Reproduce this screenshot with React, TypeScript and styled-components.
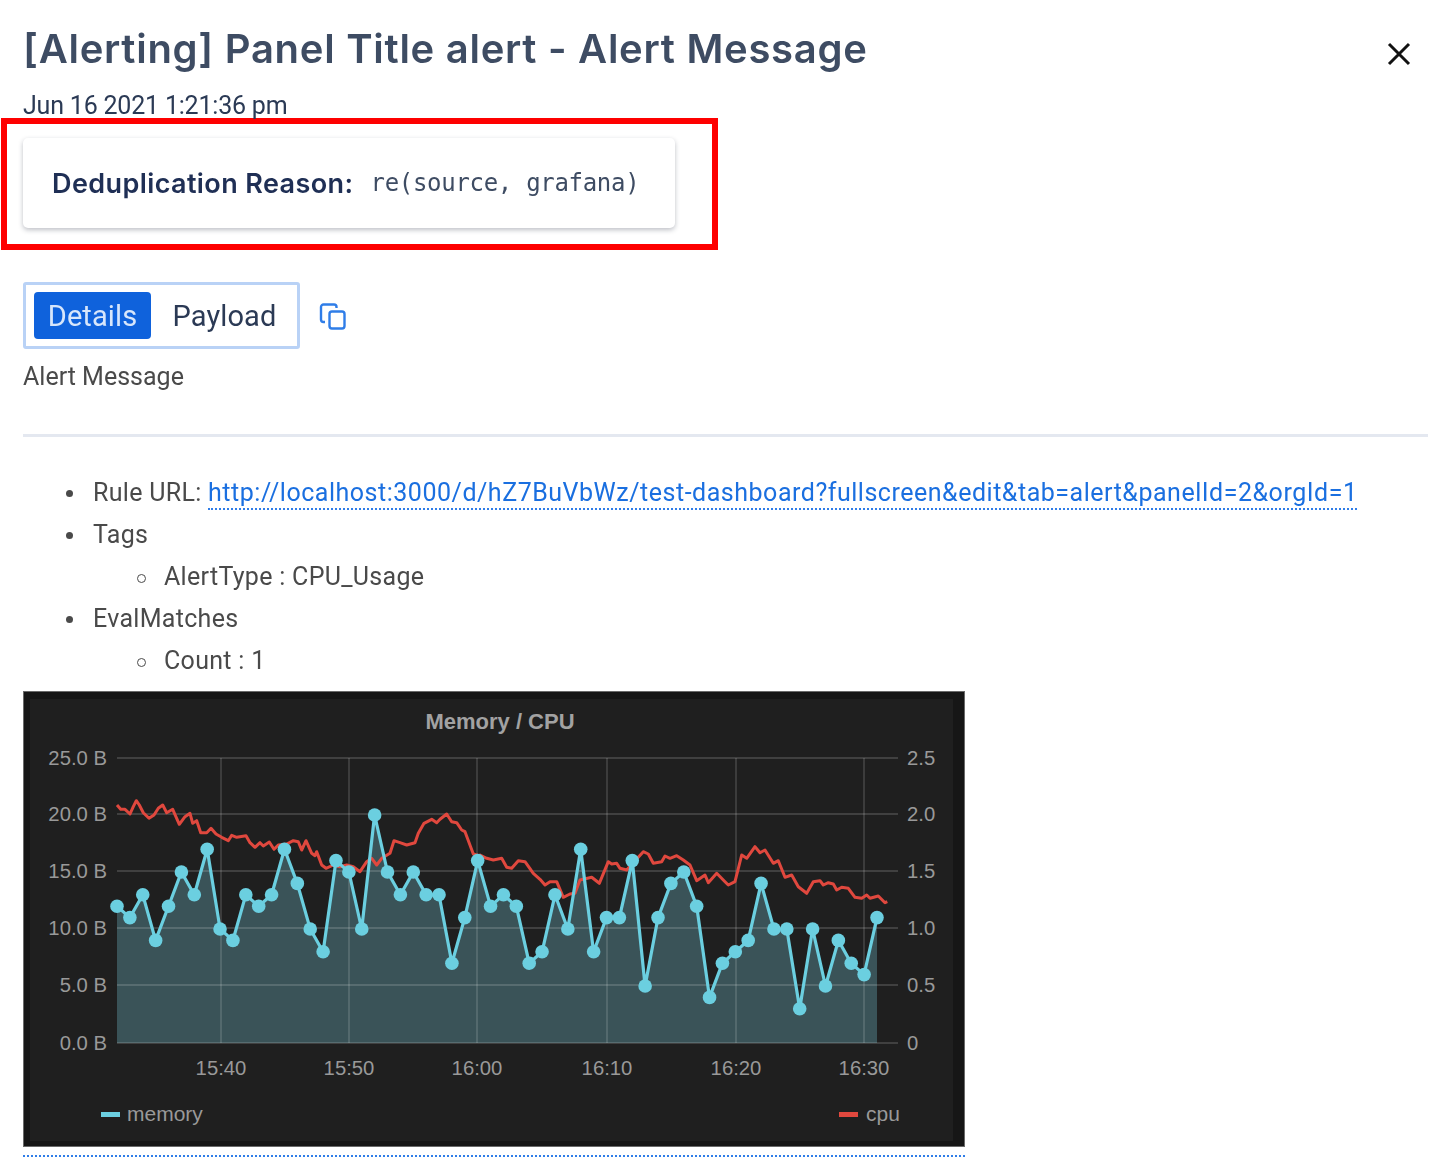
import React from 'react';
import styled, { createGlobalStyle } from 'styled-components';

const GlobalStyle = createGlobalStyle`
  html, body {
    margin: 0;
    padding: 0;
    background: #fff;
    font-family: Roboto, "Noto Sans", sans-serif;
  }
`;

const Page = styled.div`
  width: 1446px;
  height: 1160px;
  overflow: hidden;
  box-sizing: border-box;
  padding: 23px 18px 0 23px;
  filter: blur(0.4px);
`;

const Header = styled.div`
  display: flex;
  justify-content: space-between;
  align-items: flex-start;
`;

const Title = styled.h1`
  margin: 0;
  font-family: Inter, Roboto, sans-serif;
  font-size: 40px;
  line-height: 52px;
  font-weight: 600;
  color: #3e4c63;
  letter-spacing: 0.72px;
`;

const CloseButton = styled.button`
  display: flex;
  margin: 19px 17px 0 0;
  padding: 0;
  border: 0;
  background: none;
  color: #111;
`;

const Timestamp = styled.div`
  margin-top: 18px;
  font-size: 25px;
  line-height: 26px;
  color: #2b3a55;
  letter-spacing: -0.2px;
`;

const Highlight = styled.div`
  box-sizing: border-box;
  width: 717px;
  height: 132px;
  margin: -1px 0 0 -22px;
  padding: 14px 0 0 16px;
  border: 6px solid #fe0000;
`;

const ReasonCard = styled.div`
  display: flex;
  align-items: center;
  box-sizing: border-box;
  width: 652px;
  height: 90px;
  padding-left: 29px;
  border-radius: 5px;
  background: #fff;
  box-shadow: 0 2px 5px rgba(20, 30, 50, 0.28);
`;

const ReasonLabel = styled.span`
  font-family: Inter, Roboto, sans-serif;
  font-size: 27px;
  font-weight: 600;
  color: #1f2f55;
  letter-spacing: 0.4px;
`;

const ReasonValue = styled.code`
  margin-left: 17px;
  font-family: "DejaVu Sans Mono", monospace;
  font-size: 24px;
  color: #3e4c63;
  letter-spacing: -0.3px;
`;

const TabRow = styled.div`
  display: flex;
  align-items: center;
  gap: 19px;
  margin-top: 32px;
`;

const TabBox = styled.div`
  display: flex;
  box-sizing: border-box;
  width: 277px;
  height: 67px;
  padding: 7px 8px;
  border: 3px solid #b9d2f6;
  border-radius: 3px;
`;

const Tab = styled.div<{ active?: boolean }>`
  display: flex;
  align-items: center;
  justify-content: center;
  flex-shrink: 0;
  box-sizing: border-box;
  width: ${p => (p.active ? '117px' : '138px')};
  padding-left: ${p => (p.active ? '0' : '9px')};
  border-radius: 4px;
  font-size: 29px;
  letter-spacing: 0.1px;
  color: ${p => (p.active ? '#d7e6fb' : '#2b3a55')};
  background: ${p => (p.active ? '#0f62dc' : 'transparent')};
`;

const CopyIcon = styled.svg`
  display: block;
  color: #2f7de8;
`;

const Message = styled.div`
  margin-top: 14px;
  font-size: 25px;
  line-height: 27px;
  color: #4a4a4a;
`;

const Divider = styled.hr`
  height: 3px;
  margin: 44px 0 0;
  border: 0;
  background: #e4e8f0;
`;

const BulletList = styled.ul`
  margin: 35px 0 0;
  padding: 0 0 0 70px;
  font-size: 25px;
  line-height: 42px;
  color: #4a4a4a;
  list-style: none;
  letter-spacing: 0.3px;
`;

const BulletItem = styled.li`
  position: relative;

  &::before {
    content: '';
    position: absolute;
    left: -27px;
    top: 18px;
    width: 7px;
    height: 7px;
    border-radius: 50%;
    background: #4a4a4a;
  }
`;

const SubList = styled.ul`
  margin: 0;
  padding-left: 71px;
  list-style: none;
`;

const SubItem = styled.li`
  position: relative;

  &::before {
    content: '';
    position: absolute;
    left: -27px;
    top: 18px;
    box-sizing: border-box;
    width: 9px;
    height: 9px;
    border: 1.5px solid #4a4a4a;
    border-radius: 50%;
  }
`;

const Link = styled.a`
  color: #1a6fe0;
  letter-spacing: 0.52px;
  border-bottom: 2px dotted #2f7de8;
  padding-bottom: 1px;
`;

const ChartLink = styled.div`
  width: 942px;
  margin-top: 9px;
  padding-bottom: 8px;
  border-bottom: 2px dotted #2f7de8;
`;

const ChartSvg = styled.svg`
  display: block;
  font-family: "Liberation Sans", Arial, sans-serif;
`;

const memory = [
  12, 11, 13, 9, 12, 15, 13, 17, 10, 9, 13, 12, 13, 17, 14, 10, 8, 16, 15, 10,
  20, 15, 13, 15, 13, 13, 7, 11, 16, 12, 13, 12, 7, 8, 13, 10, 17, 8, 11, 11,
  16, 5, 11, 14, 15, 12, 4, 7, 8, 9, 14, 10, 10, 3, 10, 5, 9, 7, 6, 11,
];

// traced from the reference in 3x crop coordinates
const cpuLeft = [
  351,345, 362,358, 375,358, 390,372, 400,350, 409,332, 418,345, 430,368, 447,385, 462,375,
  475,355, 488,345, 500,368, 518,358, 538,403, 555,380, 570,370, 578,400, 590,392, 602,428,
  620,428, 633,415, 648,432, 665,442, 685,452, 695,436, 710,442, 738,437, 750,458, 765,472,
  780,458, 790,468, 808,456, 822,478, 835,465, 860,462, 880,452, 895,455, 905,480, 918,452,
  935,490, 945,497, 950,485, 965,525, 978,535, 1000,525, 1020,530, 1040,525, 1060,530, 1080,545,
  1100,515, 1115,505, 1130,525, 1145,505, 1170,490, 1182,452, 1200,458, 1220,465, 1245,458, 1255,430,
  1272,400, 1295,388, 1310,398, 1320,388, 1340,372, 1355,395, 1370,398, 1385,420, 1395,425, 1420,492,
  1440,498,
];
const cpuRight = [
  0,495, 20,505, 40,510, 65,505, 80,532, 95,535, 115,512, 135,515, 160,550, 180,568,
  195,585, 210,575, 230,575, 250,622, 270,612, 285,610, 300,570, 335,562, 358,580, 385,515,
  395,522, 410,520, 420,535, 440,540, 490,485, 505,492, 520,520, 545,515, 555,498, 570,505,
  590,497, 610,510, 630,525, 650,572, 675,555, 685,578, 710,550, 735,575, 745,585, 765,575,
  785,495, 800,505, 825,470, 840,488, 855,480, 880,520, 895,512, 915,562, 935,555, 955,590,
  980,610, 1000,575, 1020,572, 1030,585, 1045,578, 1060,582, 1070,600, 1085,592, 1105,595, 1125,622,
  1145,625, 1160,615, 1170,625, 1195,618, 1215,638, 1222,635,
];

const toPairs = (list: number[], offset: number) => {
  const out: string[] = [];
  for (let i = 0; i < list.length; i += 2) {
    out.push(`${(list[i] / 3 + offset).toFixed(1)},${(list[i + 1] / 3 + 690).toFixed(1)}`);
  }
  return out;
};

const cpuPoints = [...toPairs(cpuLeft, 0), ...toPairs(cpuRight, 480)].join(' ');

const memX = (i: number) => 117 + (i * 760) / 59;
const memY = (v: number) => 1043 - v * 11.4;
const memPoints = memory.map((v, i) => `${memX(i).toFixed(1)},${memY(v).toFixed(1)}`).join(' ');

const gridY = [758, 814, 871, 928, 985, 1043];
const gridX = [221, 349, 477, 607, 736, 864];
const leftTicks = ['25.0 B', '20.0 B', '15.0 B', '10.0 B', '5.0 B', '0.0 B'];
const rightTicks = ['2.5', '2.0', '1.5', '1.0', '0.5', '0'];
const timeTicks = ['15:40', '15:50', '16:00', '16:10', '16:20', '16:30'];

const Chart = () => (
  <ChartSvg width={942} height={456} viewBox="23 691 942 456">
    <rect x={23.5} y={691.5} width={941} height={455} fill="#161616" stroke="#6a6a6a" />
    <rect x={30} y={699} width={923} height={442} fill="#1f1f1f" />
    <polygon points={`117,1043 ${memPoints} 877,1043`} fill="#3a5358" />
    {gridY.map(y => (
      <line key={y} x1={117} x2={898} y1={y} y2={y} stroke="#fff" strokeOpacity={0.2} strokeWidth={1.3} />
    ))}
    {gridX.map(x => (
      <line key={x} x1={x} x2={x} y1={758} y2={1043} stroke="#fff" strokeOpacity={0.2} strokeWidth={1.3} />
    ))}
    <polyline points={cpuPoints} fill="none" stroke="#e0483e" strokeWidth={3} strokeLinejoin="round" />
    <polyline points={memPoints} fill="none" stroke="#6bcfe0" strokeWidth={3.2} />
    {memory.map((v, i) => (
      <circle key={i} cx={memX(i)} cy={memY(v)} r={6.8} fill="#6bcfe0" />
    ))}
    <text x={500} y={729} fontSize={22} fontWeight={700} fill="#a2a2a2" textAnchor="middle">
      Memory / CPU
    </text>
    {leftTicks.map((t, i) => (
      <text key={t} x={107} y={gridY[i] + 7} fontSize={20.3} fill="#999" textAnchor="end">
        {t}
      </text>
    ))}
    {rightTicks.map((t, i) => (
      <text key={t} x={907} y={gridY[i] + 7} fontSize={20.3} fill="#999">
        {t}
      </text>
    ))}
    {timeTicks.map((t, i) => (
      <text key={t} x={gridX[i]} y={1075} fontSize={20.3} fill="#999" textAnchor="middle">
        {t}
      </text>
    ))}
    <rect x={101} y={1112} width={19} height={5} fill="#6bcfe0" />
    <text x={127} y={1121} fontSize={21} fill="#999">
      memory
    </text>
    <rect x={839} y={1112} width={19} height={5} fill="#e0483e" />
    <text x={866} y={1121} fontSize={21} fill="#999">
      cpu
    </text>
  </ChartSvg>
);

export default function App() {
  return (
    <Page>
      <GlobalStyle />
      <Header>
        <Title>[Alerting] Panel Title alert - Alert Message</Title>
        <CloseButton>
          <svg width="24" height="24" viewBox="0 0 24 24" fill="none" stroke="currentColor" strokeWidth="3">
            <path d="M2 2 L22 22 M22 2 L2 22" />
          </svg>
        </CloseButton>
      </Header>
      <Timestamp>Jun 16 2021 1:21:36 pm</Timestamp>
      <Highlight>
        <ReasonCard>
          <ReasonLabel>Deduplication Reason:</ReasonLabel>
          <ReasonValue>re(source, grafana)</ReasonValue>
        </ReasonCard>
      </Highlight>
      <TabRow>
        <TabBox>
          <Tab active>Details</Tab>
          <Tab>Payload</Tab>
        </TabBox>
        <CopyIcon width="28" height="28" viewBox="0 0 28 28" fill="none" stroke="currentColor" strokeWidth="2.4">
          <rect x="10.5" y="9.5" width="15" height="17" rx="2.5" />
          <path d="M6 20 H4.5 A2.5 2.5 0 0 1 2 17.5 V5 A2.5 2.5 0 0 1 4.5 2.5 H15 A2.5 2.5 0 0 1 17.5 5 V6" />
        </CopyIcon>
      </TabRow>
      <Message>Alert Message</Message>
      <Divider />
      <BulletList>
        <BulletItem>
          Rule URL:{' '}
          <Link>http://localhost:3000/d/hZ7BuVbWz/test-dashboard?fullscreen&amp;edit&amp;tab=alert&amp;panelId=2&amp;orgId=1</Link>
        </BulletItem>
        <BulletItem>
          Tags
          <SubList>
            <SubItem>AlertType : CPU_Usage</SubItem>
          </SubList>
        </BulletItem>
        <BulletItem>
          EvalMatches
          <SubList>
            <SubItem>Count : 1</SubItem>
          </SubList>
        </BulletItem>
      </BulletList>
      <ChartLink>
        <Chart />
      </ChartLink>
    </Page>
  );
}
